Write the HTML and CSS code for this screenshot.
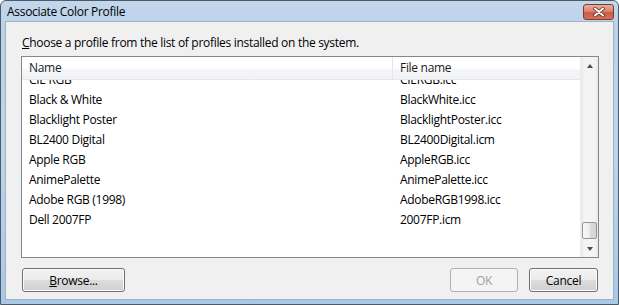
FILE: index.html
```html
<!DOCTYPE html>
<html>
<head>
<meta charset="utf-8">
<link rel="stylesheet" href="styles.css">
</head>
<body>
<div class="window">
  <div class="titlebar">
    <span class="title">Associate Color Profile</span>
    <div class="close">
      <svg width="14" height="10" viewBox="0 0 14 10">
        <path d="M3 1.5 L11 8.5 M11 1.5 L3 8.5" stroke="#5a2418" stroke-width="3.4" stroke-linecap="round"/>
        <path d="M3 1.5 L11 8.5 M11 1.5 L3 8.5" stroke="#ffffff" stroke-width="2" stroke-linecap="round"/>
      </svg>
    </div>
  </div>
  <div class="body">
    <p class="prompt"><u>C</u>hoose a profile from the list of profiles installed on the system.</p>
    <div class="list">
      <div class="list-main">
        <div class="header">
          <div class="col name">Name</div>
          <div class="col file">File name</div>
        </div>
        <div class="rows">
          <div class="rows-inner">
            <div class="row"><div class="col name">CIE RGB</div><div class="col file">CIERGB.icc</div></div>
            <div class="row"><div class="col name">Black &amp; White</div><div class="col file">BlackWhite.icc</div></div>
            <div class="row"><div class="col name">Blacklight Poster</div><div class="col file">BlacklightPoster.icc</div></div>
            <div class="row"><div class="col name">BL2400 Digital</div><div class="col file">BL2400Digital.icm</div></div>
            <div class="row"><div class="col name">Apple RGB</div><div class="col file">AppleRGB.icc</div></div>
            <div class="row"><div class="col name">AnimePalette</div><div class="col file">AnimePalette.icc</div></div>
            <div class="row"><div class="col name">Adobe RGB (1998)</div><div class="col file">AdobeRGB1998.icc</div></div>
            <div class="row"><div class="col name">Dell 2007FP</div><div class="col file">2007FP.icm</div></div>
          </div>
        </div>
      </div>
      <div class="scrollbar">
        <div class="arrow"><span class="tri up"></span></div>
        <div class="track"><div class="thumb"></div></div>
        <div class="arrow"><span class="tri down"></span></div>
      </div>
    </div>
    <div class="buttons">
      <button class="btn browse"><u>B</u>rowse...</button>
      <div class="spacer"></div>
      <button class="btn ok" disabled>OK</button>
      <button class="btn cancel">Cancel</button>
    </div>
  </div>
</div>
</body>
</html>
```
FILE: styles.css
```css
html, body {
  margin: 0;
  padding: 0;
  width: 619px;
  height: 305px;
  overflow: hidden;
  background: #ffffff;
}
.window {
  box-sizing: border-box;
  width: 619px;
  height: 305px;
  border: 1px solid #4e5a66;
  border-radius: 6px 6px 0 0;
  background: linear-gradient(#c3d7ec, #b9d1ea 30px, #bcd4ec 150px, #a9c8e8);
  display: flex;
  flex-direction: column;
  font-family: "Open Sans", "Noto Sans", sans-serif;
  font-size: 12px;
  letter-spacing: -0.3px;
  color: #000;
}
.titlebar {
  height: 20px;
  display: flex;
  align-items: center;
  padding: 0 4px 0 6px;
}
.title {
  flex: 1;
  font-size: 12px;
  color: #000;
  padding-top: 1px;
}
.close {
  box-sizing: border-box;
  width: 31px;
  height: 16px;
  margin-top: 2px;
  border: 1px solid #7b3b2e;
  border-radius: 3px;
  background: linear-gradient(#e8b0a0, #d98470 45%, #c95a42 55%, #d57258);
  display: flex;
  align-items: center;
  justify-content: center;
}
.body {
  flex: 1;
  margin: 0 4px 4px 4px;
  border: 1px solid #9fb3c7;
  background: #f0f0f0;
  padding: 13px 14px 0 15px;
  display: flex;
  flex-direction: column;
}
.prompt {
  margin: 0;
  height: 15px;
  line-height: 15px;
  padding-left: 1px;
  white-space: nowrap;
}
.list {
  margin-top: 6px;
  height: 202px;
  box-sizing: border-box;
  border: 1px solid #828790;
  background: #fff;
  display: flex;
}
.list-main {
  flex: 1;
  display: flex;
  flex-direction: column;
  min-width: 0;
}
.header {
  height: 23px;
  box-sizing: border-box;
  border-bottom: 1px solid #e3e6ea;
  background: linear-gradient(#ffffff, #ffffff 50%, #f4f5f7 60%, #f1f2f4);
  display: flex;
  align-items: flex-start;
  color: #1b1b1b;
}
.col {
  white-space: nowrap;
  overflow: hidden;
}
.col.name {
  width: 371px;
  box-sizing: border-box;
  padding-left: 7px;
}
.header .col.name {
  border-right: 1px solid #e3e6ea;
  height: 22px;
  line-height: 22px;
}
.header .col.file {
  line-height: 22px;
}
.col.file {
  flex: 1;
  padding-left: 7px;
}
.rows {
  flex: 1;
  overflow: hidden;
}
.rows-inner {
  margin-top: -10px;
}
.row {
  height: 20px;
  line-height: 20px;
  display: flex;
}
.scrollbar {
  width: 17px;
  display: flex;
  flex-direction: column;
  background: linear-gradient(90deg, #e8e8e8, #f4f4f4 20%, #f4f4f4 80%, #e8e8e8);
  border-left: 1px solid #eeeeee;
}
.arrow {
  height: 17px;
  display: flex;
  align-items: center;
  justify-content: center;
}
.tri {
  width: 0;
  height: 0;
  border-left: 3.5px solid transparent;
  border-right: 3.5px solid transparent;
}
.tri.up {
  border-bottom: 4px solid #4d4d4d;
}
.tri.down {
  border-top: 4px solid #4d4d4d;
}
.track {
  flex: 1;
  display: flex;
  flex-direction: column;
  justify-content: flex-end;
  align-items: center;
}
.thumb {
  width: 15px;
  height: 17px;
  box-sizing: border-box;
  border: 1px solid #969696;
  border-radius: 2px;
  background: linear-gradient(90deg, #f7f7f7, #ececec 50%, #dcdcdc 51%, #d4d4d4);
  margin-bottom: 1px;
}
.buttons {
  margin-top: 10px;
  display: flex;
  align-items: center;
}
.spacer {
  flex: 1;
}
.btn {
  box-sizing: border-box;
  height: 24px;
  font-family: "Open Sans", "Noto Sans", sans-serif;
  font-size: 12px;
  letter-spacing: -0.3px;
  color: #000;
  border: 1px solid #707070;
  border-radius: 3px;
  background: linear-gradient(#f2f2f2, #ebebeb 50%, #dddddd 51%, #cfcfcf);
  box-shadow: inset 0 0 0 1px #fcfcfc;
  padding: 0;
  margin: 0;
}
.btn.browse {
  width: 103px;
  margin-left: 1px;
}
.btn.ok {
  width: 68px;
  color: #a0a0a0;
  border-color: #adb2b5;
  background: #f4f4f4;
  box-shadow: none;
}
.btn.cancel {
  width: 69px;
  margin-left: 11px;
  margin-right: 1px;
}
```
